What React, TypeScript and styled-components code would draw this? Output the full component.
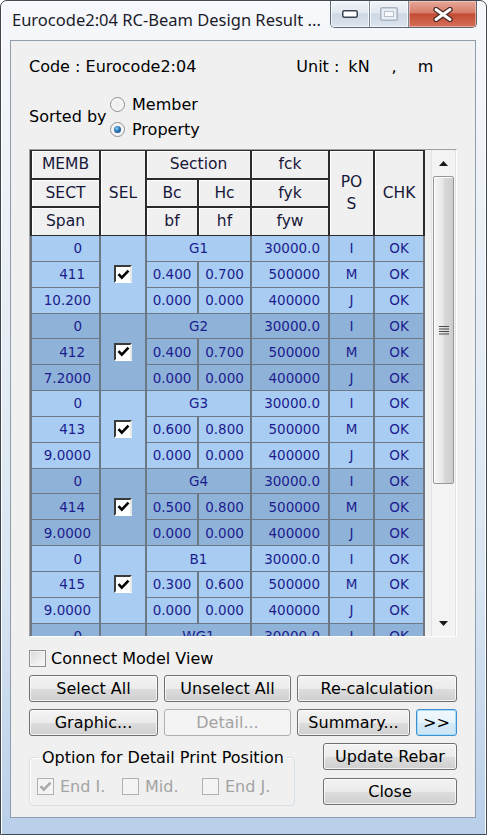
import React from 'react'
import styled, { createGlobalStyle } from 'styled-components'

const GlobalStyle = createGlobalStyle`
  html, body {
    margin: 0;
    padding: 0;
    background: #ffffff;
  }
  body {
    font-family: 'DejaVu Sans', 'Liberation Sans', sans-serif;
  }
  * {
    box-sizing: border-box;
  }
`

type Group = {
  sect: string
  span: string
  name: string
  bc: string
  hc: string
}

const groups: Group[] = [
  { sect: '411', span: '10.200', name: 'G1', bc: '0.400', hc: '0.700' },
  { sect: '412', span: '7.2000', name: 'G2', bc: '0.400', hc: '0.700' },
  { sect: '413', span: '9.0000', name: 'G3', bc: '0.600', hc: '0.800' },
  { sect: '414', span: '9.0000', name: 'G4', bc: '0.500', hc: '0.800' },
  { sect: '415', span: '9.0000', name: 'B1', bc: '0.300', hc: '0.600' },
  { sect: '416', span: '9.0000', name: 'WG1', bc: '0.300', hc: '0.600' },
]

const positions = [
  { fc: '30000.0', pos: 'I' },
  { fc: '500000', pos: 'M' },
  { fc: '400000', pos: 'J' },
]

const COLUMNS = '67px 44px 50px 51px 76px 43px 48px'

const CheckMark = ({ color = '#000000' }: { color?: string }) => (
  <svg width='13' height='11' viewBox='0 0 13 11'>
    <path d='M1.5 5.2 L4.8 8.6 L11.5 1.6' fill='none' stroke={color} strokeWidth='2.6' />
  </svg>
)

const App = () => {
  return (
    <>
      <GlobalStyle />
      <Window>
        <TitleBar>
          <TitleText>Eurocode2:04 RC-Beam Design Result ...</TitleText>
          <CaptionButtons>
            <CaptionButton $w={39}>
              <svg width='16' height='8' viewBox='0 0 16 8'>
                <rect x='0.75' y='0.75' width='14.5' height='6.5' rx='1.5' fill='#ffffff' stroke='#3a4452' strokeWidth='1.5' />
              </svg>
            </CaptionButton>
            <CaptionButton $w={39}>
              <svg width='18' height='14' viewBox='0 0 18 14'>
                <rect x='0.75' y='0.75' width='16.5' height='12.5' rx='1.5' fill='#e9eef4' stroke='#aab4c0' strokeWidth='1.5' />
                <rect x='4.5' y='4.5' width='9' height='5' fill='#f7f9fb' stroke='#b8c1cc' strokeWidth='1' />
              </svg>
            </CaptionButton>
            <CloseButton>
              <svg width='22' height='15' viewBox='0 0 22 15'>
                <path d='M4 2.5 L18 12.5 M18 2.5 L4 12.5' stroke='#4a2a26' strokeWidth='5.4' strokeLinecap='round' />
                <path d='M4 2.5 L18 12.5 M18 2.5 L4 12.5' stroke='#ffffff' strokeWidth='3' strokeLinecap='round' />
              </svg>
            </CloseButton>
          </CaptionButtons>
        </TitleBar>

        <Client>
          <InfoRow>
            <span>Code : Eurocode2:04</span>
            <UnitBlock>
              <span>Unit :</span>
              <UnitPart $ml={9}>kN</UnitPart>
              <UnitPart $ml={22}>,</UnitPart>
              <UnitPart $ml={21}>m</UnitPart>
            </UnitBlock>
          </InfoRow>

          <SortRow>
            <SortLabel>Sorted by</SortLabel>
            <RadioGroup>
              <RadioItem>
                <Radio />
                Member
              </RadioItem>
              <RadioItem>
                <Radio $checked />
                Property
              </RadioItem>
            </RadioGroup>
          </SortRow>

          <GridFrame>
            <TableCol>
              <HeaderGrid>
                <HeadCell>MEMB</HeadCell>
                <HeadCell $rows={3}>SEL</HeadCell>
                <HeadCell $cols={2}>Section</HeadCell>
                <HeadCell>fck</HeadCell>
                <HeadCell $rows={3} $lh={22}>
                  PO
                  <br />S
                </HeadCell>
                <HeadCell $rows={3}>CHK</HeadCell>
                <HeadCell>SECT</HeadCell>
                <HeadCell>Bc</HeadCell>
                <HeadCell>Hc</HeadCell>
                <HeadCell>fyk</HeadCell>
                <HeadCell>Span</HeadCell>
                <HeadCell>bf</HeadCell>
                <HeadCell>hf</HeadCell>
                <HeadCell>fyw</HeadCell>
              </HeaderGrid>
              <DataViewport>
                <DataGrid>
                  {groups.map((g, i) => {
                    const dark = i % 2 === 1
                    return (
                      <React.Fragment key={g.name}>
                        <Cell $dark={dark} $align='right' $pr={17}>0</Cell>
                        <Cell $dark={dark} $rows={3} $align='center'>
                          <SelBox>
                            <CheckMark />
                          </SelBox>
                        </Cell>
                        <Cell $dark={dark} $cols={2} $align='center'>{g.name}</Cell>
                        <Cell $dark={dark} $align='right' $pr={8}>{positions[0].fc}</Cell>
                        <Cell $dark={dark} $align='center'>{positions[0].pos}</Cell>
                        <Cell $dark={dark} $align='center'>OK</Cell>

                        <Cell $dark={dark} $align='right' $pr={14}>{g.sect}</Cell>
                        <Cell $dark={dark} $align='center'>{g.bc}</Cell>
                        <Cell $dark={dark} $align='center'>{g.hc}</Cell>
                        <Cell $dark={dark} $align='right' $pr={8}>{positions[1].fc}</Cell>
                        <Cell $dark={dark} $align='center'>{positions[1].pos}</Cell>
                        <Cell $dark={dark} $align='center'>OK</Cell>

                        <Cell $dark={dark} $align='right' $pr={8}>{g.span}</Cell>
                        <Cell $dark={dark} $align='center'>0.000</Cell>
                        <Cell $dark={dark} $align='center'>0.000</Cell>
                        <Cell $dark={dark} $align='right' $pr={8}>{positions[2].fc}</Cell>
                        <Cell $dark={dark} $align='center'>{positions[2].pos}</Cell>
                        <Cell $dark={dark} $align='center'>OK</Cell>
                      </React.Fragment>
                    )
                  })}
                </DataGrid>
              </DataViewport>
            </TableCol>
            <ScrollBar>
              <ScrollArrow>
                <svg width='9' height='5' viewBox='0 0 9 5'>
                  <path d='M0 5 L4.5 0 L9 5 Z' fill='#1a1a1a' />
                </svg>
              </ScrollArrow>
              <Thumb>
                <svg width='10' height='9' viewBox='0 0 10 9'>
                  <path d='M0 0.5 H10 M0 3 H10 M0 5.5 H10 M0 8 H10' stroke='#4a4a4a' strokeWidth='1.2' />
                </svg>
              </Thumb>
              <Track />
              <ScrollArrow>
                <svg width='9' height='5' viewBox='0 0 9 5'>
                  <path d='M0 0 L4.5 5 L9 0 Z' fill='#1a1a1a' />
                </svg>
              </ScrollArrow>
            </ScrollBar>
          </GridFrame>

          <ConnectRow>
            <PlainBox />
            Connect Model View
          </ConnectRow>

          <ButtonRow>
            <Button $w={129}>Select All</Button>
            <Button $w={127}>Unselect All</Button>
            <Button $w={160}>Re-calculation</Button>
          </ButtonRow>
          <ButtonRow>
            <Button $w={129}>Graphic...</Button>
            <Button $w={127} disabled>
              Detail...
            </Button>
            <Button $w={113}>Summary...</Button>
            <Button $w={41} $focus>
              &gt;&gt;
            </Button>
          </ButtonRow>

          <BottomRow>
            <OptionGroup>
              <OptionLegend>Option for Detail Print Position</OptionLegend>
              <OptionRow>
                <OptionItem $w={85}>
                  <DisabledBox>
                    <CheckMark color='#a9a9a9' />
                  </DisabledBox>
                  End I.
                </OptionItem>
                <OptionItem $w={80}>
                  <DisabledBox />
                  Mid.
                </OptionItem>
                <OptionItem $w={80}>
                  <DisabledBox />
                  End J.
                </OptionItem>
              </OptionRow>
            </OptionGroup>
            <SideButtons>
              <Button $w={134}>Update Rebar</Button>
              <Button $w={134}>Close</Button>
            </SideButtons>
          </BottomRow>
        </Client>
      </Window>
    </>
  )
}

export default App

const Window = styled.div`
  width: 487px;
  height: 835px;
  display: flex;
  flex-direction: column;
  border: 1px solid #3f4753;
  border-radius: 7px 7px 0 0;
  padding: 0 10px 16px 9px;
  background: linear-gradient(180deg, #f6f8fb 0%, #eef2f7 20%, #d9e5f2 70%, #b9cfe9 100%);
  box-shadow: inset 1px 1px 0 #ffffff, inset -1px 0 0 #ffffff;
`

const TitleBar = styled.div`
  height: 39px;
  display: flex;
  align-items: flex-start;
`

const TitleText = styled.div`
  margin: 9px 0 0 2px;
  font-family: 'Noto Sans', 'DejaVu Sans', sans-serif;
  font-size: 16.5px;
  line-height: 20px;
  color: #1c1c2a;
  white-space: nowrap;
`

const CaptionButtons = styled.div`
  margin-left: auto;
  margin-right: -1px;
  display: flex;
  height: 27px;
  border: 1px solid #5d6775;
  border-top: none;
  border-radius: 0 0 5px 5px;
  overflow: hidden;
`

const CaptionButton = styled.div<{ $w: number }>`
  width: ${(p) => p.$w}px;
  display: flex;
  align-items: center;
  justify-content: center;
  border-right: 1px solid #7d8896;
  background: linear-gradient(180deg, #f1f4f8 0%, #e1e8f0 45%, #cdd8e5 50%, #dbe4ee 100%);
  box-shadow: inset 0 0 0 1px rgba(255, 255, 255, 0.7);
`

const CloseButton = styled.div`
  width: 67px;
  display: flex;
  align-items: center;
  justify-content: center;
  background: linear-gradient(180deg, #e7a898 0%, #d77d69 45%, #c44b33 50%, #d4705a 100%);
  box-shadow: inset 0 0 0 1px rgba(255, 220, 210, 0.5);
`

const Client = styled.div`
  flex: 1;
  display: flex;
  flex-direction: column;
  border: 1px solid #8e9cad;
  background: #f0f0f0;
  padding: 16px 18px 0 18px;
  font-size: 16px;
  color: #000000;
`

const InfoRow = styled.div`
  display: flex;
  height: 19px;
  line-height: 19px;
  white-space: nowrap;
`

const UnitBlock = styled.div`
  display: flex;
  margin-left: 100px;
`

const UnitPart = styled.span<{ $ml: number }>`
  margin-left: ${(p) => p.$ml}px;
`

const SortRow = styled.div`
  display: flex;
  align-items: center;
  margin-top: 16px;
`

const SortLabel = styled.div`
  width: 81px;
  margin-bottom: 2px;
  line-height: 19px;
`

const RadioGroup = styled.div`
  display: flex;
  flex-direction: column;
`

const RadioItem = styled.label`
  height: 25px;
  display: flex;
  align-items: center;
  gap: 7px;
`

const Radio = styled.span<{ $checked?: boolean }>`
  width: 15px;
  height: 15px;
  border-radius: 50%;
  border: 1px solid #8d8f91;
  background: radial-gradient(circle at 50% 50%, #ececec 0%, #f6f6f6 70%, #ffffff 100%);
  display: flex;
  align-items: center;
  justify-content: center;
  &::after {
    content: '';
    width: 7px;
    height: 7px;
    border-radius: 50%;
    display: ${(p) => (p.$checked ? 'block' : 'none')};
    background: radial-gradient(circle at 40% 35%, #8fd2f7 0%, #2a76b8 45%, #0c3d6e 100%);
  }
`

const GridFrame = styled.div`
  margin-top: 7px;
  width: 428px;
  height: 488px;
  display: flex;
  border: 1px solid;
  border-color: #a0a0a0 #ffffff #ffffff #a0a0a0;
  background: #f0f0f0;
  overflow: hidden;
`

const TableCol = styled.div`
  width: 395px;
  display: flex;
  flex-direction: column;
`

const HeaderGrid = styled.div`
  display: grid;
  grid-template-columns: ${COLUMNS};
  grid-template-rows: 27px 26px 27px;
  gap: 2px;
  padding: 1px 2px;
  background: #2b2b2b;
`

const HeadCell = styled.div<{ $cols?: number; $rows?: number; $lh?: number }>`
  grid-column: span ${(p) => p.$cols ?? 1};
  grid-row: span ${(p) => p.$rows ?? 1};
  background: #f0f0f0;
  box-shadow: inset 1px 1px 0 #ffffff;
  display: flex;
  align-items: center;
  justify-content: center;
  text-align: center;
  font-size: 15.5px;
  line-height: ${(p) => p.$lh ?? 19}px;
  color: #17173a;
`

const DataViewport = styled.div`
  flex: 1;
  overflow: hidden;
`

const DataGrid = styled.div`
  display: grid;
  grid-template-columns: ${COLUMNS};
  grid-auto-rows: 24.85px;
  gap: 1px 2px;
  padding: 0 2px;
  background: #6d7884;
`

const Cell = styled.div<{
  $dark?: boolean
  $align: 'center' | 'right'
  $pr?: number
  $cols?: number
  $rows?: number
}>`
  grid-column: span ${(p) => p.$cols ?? 1};
  grid-row: span ${(p) => p.$rows ?? 1};
  background: ${(p) => (p.$dark ? '#8fb2d9' : '#a8ccf2')};
  color: #1c1c8e;
  font-size: 13.5px;
  display: flex;
  align-items: center;
  justify-content: ${(p) => (p.$align === 'right' ? 'flex-end' : 'center')};
  padding-right: ${(p) => p.$pr ?? 0}px;
  white-space: nowrap;
`

const SelBox = styled.span`
  width: 18px;
  height: 18px;
  background: #ffffff;
  border: 2px solid;
  border-color: #3a3a3a #e8e8e8 #ffffff #3a3a3a;
  display: flex;
  align-items: center;
  justify-content: center;
`

const ScrollBar = styled.div`
  margin-left: auto;
  width: 25px;
  display: flex;
  flex-direction: column;
  border-left: 1px solid #e2e2e2;
  border-right: 1px solid #e2e2e2;
  background: #f3f3f3;
`

const ScrollArrow = styled.div`
  height: 26px;
  display: flex;
  align-items: center;
  justify-content: center;
`

const Thumb = styled.div`
  height: 308px;
  margin: 0 1px;
  border: 1px solid #979797;
  border-radius: 2px;
  background: linear-gradient(90deg, #f4f4f4 0%, #e8e8e8 45%, #d9d9d9 55%, #cdcdcd 100%);
  box-shadow: inset 1px 1px 0 #ffffff;
  display: flex;
  align-items: center;
  justify-content: center;
`

const Track = styled.div`
  flex: 1;
`

const ConnectRow = styled.label`
  margin-top: 12px;
  height: 19px;
  display: flex;
  align-items: center;
  gap: 5px;
  line-height: 19px;
`

const PlainBox = styled.span`
  width: 17px;
  height: 17px;
  border: 1px solid #8f8f8f;
  background: linear-gradient(135deg, #d8d8d8 0%, #eeeeee 60%, #f8f8f8 100%);
  box-shadow: inset 0 0 0 1px #f4f4f4;
`

const ButtonRow = styled.div`
  margin-top: 7px;
  display: flex;
  gap: 6px;
`

const Button = styled.button<{ $w: number; $focus?: boolean }>`
  width: ${(p) => p.$w}px;
  height: 27px;
  padding: 0;
  border: 1px solid ${(p) => (p.$focus ? '#3c8fd0' : '#707070')};
  border-radius: 3px;
  background: ${(p) =>
    p.$focus
      ? 'linear-gradient(180deg, #f1f8fd 0%, #e6f3fb 50%, #d6ebf8 51%, #cbe4f5 100%)'
      : 'linear-gradient(180deg, #f3f3f3 0%, #ebebeb 50%, #dddddd 51%, #cfcfcf 100%)'};
  box-shadow: inset 0 0 0 1px ${(p) => (p.$focus ? '#a6dcf8' : 'rgba(255, 255, 255, 0.75)')};
  font-family: 'DejaVu Sans', 'Liberation Sans', sans-serif;
  font-size: 16px;
  color: #000000;
  white-space: nowrap;

  &:disabled {
    border-color: #adb2b5;
    background: #f4f4f4;
    box-shadow: none;
    color: #a3a3a3;
  }
`

const BottomRow = styled.div`
  margin-top: 7px;
  display: flex;
  align-items: flex-start;
`

const OptionGroup = styled.fieldset`
  margin: 5px 0 0 0;
  width: 259px;
  padding: 0 7px 9px 7px;
  border: 1px solid #d5dfe5;
  border-radius: 4px;
  box-shadow: inset 1px 1px 0 #ffffff;
`

const OptionLegend = styled.legend`
  margin-left: 2px;
  padding: 0 3px;
  font-size: 16px;
  line-height: 19px;
  white-space: nowrap;
`

const OptionRow = styled.div`
  margin-top: 10px;
  display: flex;
`

const OptionItem = styled.div<{ $w: number }>`
  width: ${(p) => p.$w}px;
  height: 19px;
  display: flex;
  align-items: center;
  gap: 6px;
  color: #a3a3a3;
  white-space: nowrap;
`

const DisabledBox = styled.span`
  width: 17px;
  height: 17px;
  border: 1px solid #b1b1b1;
  background: #f4f4f4;
  display: flex;
  align-items: center;
  justify-content: center;
`

const SideButtons = styled.div`
  margin-left: auto;
  display: flex;
  flex-direction: column;
  gap: 8px;
`
